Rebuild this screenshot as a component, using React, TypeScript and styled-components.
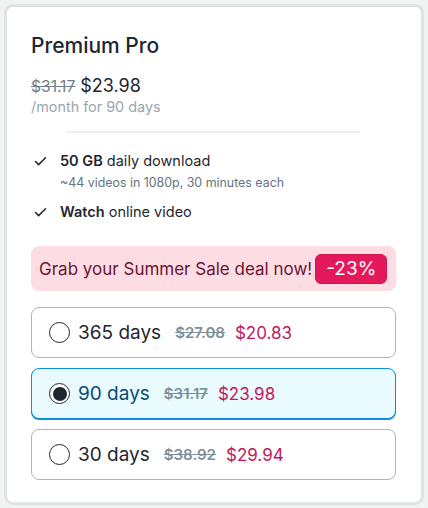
import React, { useState } from "react";
import styled, { createGlobalStyle } from "styled-components";

const GlobalStyle = createGlobalStyle`
  html, body {
    margin: 0;
    padding: 0;
    background: #f1f3f3;
    font-family: Inter, "Noto Sans", sans-serif;
    color: #1f2630;
  }
`;

interface Plan {
  id: string;
  label: string;
  oldPrice: string;
  price: string;
}

const plans: Plan[] = [
  { id: "365", label: "365 days", oldPrice: "$27.08", price: "$20.83" },
  { id: "90", label: "90 days", oldPrice: "$31.17", price: "$23.98" },
  { id: "30", label: "30 days", oldPrice: "$38.92", price: "$29.94" },
];

const CheckIcon = () => (
  <svg width="15" height="15" viewBox="0 0 24 24" fill="none" stroke="#1f2630" strokeWidth="2.4" strokeLinecap="round" strokeLinejoin="round">
    <path d="M20 6 9 17l-5-5" />
  </svg>
);

const App: React.FC = () => {
  const [selected, setSelected] = useState("90");

  return (
    <Page>
      <GlobalStyle />
      <Card>
        <Title>Premium Pro</Title>
        <PriceLine>
          <OldPrice>$31.17</OldPrice>
          <Price>$23.98</Price>
        </PriceLine>
        <Period>/month for 90 days</Period>
        <Divider />
        <Features>
          <Feature>
            <CheckIcon />
            <div>
              <FeatureText>
                <strong>50 GB</strong> daily download
              </FeatureText>
              <FeatureNote>~44 videos in 1080p, 30 minutes each</FeatureNote>
            </div>
          </Feature>
          <Feature>
            <CheckIcon />
            <FeatureText>
              <strong>Watch</strong> online video
            </FeatureText>
          </Feature>
        </Features>
        <Promo>
          <PromoText>Grab your Summer Sale deal now!</PromoText>
          <Badge>-23%</Badge>
        </Promo>
        <Options>
          {plans.map((p) => (
            <Option key={p.id} $active={selected === p.id} onClick={() => setSelected(p.id)}>
              <Radio $active={selected === p.id} />
              <OptionLabel $active={selected === p.id}>{p.label}</OptionLabel>
              <OptionOld>{p.oldPrice}</OptionOld>
              <OptionPrice>{p.price}</OptionPrice>
            </Option>
          ))}
        </Options>
      </Card>
    </Page>
  );
};

const Page = styled.div`
  padding: 4px;
`;

const Card = styled.div`
  box-sizing: border-box;
  width: 420px;
  background: #fff;
  border: 3px solid #dfe4e3;
  border-radius: 9px;
  padding: 26px 25px 22px 24px;
  display: flex;
  flex-direction: column;
`;

const Title = styled.h2`
  margin: 0;
  font-size: 21px;
  font-weight: 500;
  line-height: 26px;
  color: #1f2630;
`;

const PriceLine = styled.div`
  margin-top: 16px;
  display: flex;
  align-items: baseline;
  gap: 5px;
  line-height: 22px;
`;

const OldPrice = styled.span`
  font-size: 15.6px;
  color: #6f7f87;
  text-decoration: line-through;
`;

const Price = styled.span`
  font-size: 18px;
  color: #1f2630;
`;

const Period = styled.div`
  font-size: 14.4px;
  color: #9aa6ad;
  line-height: 18px;
`;

const Divider = styled.hr`
  margin: 15px 36px 0 36px;
  border: none;
  border-top: 2px solid #eef0f1;
`;

const Features = styled.div`
  margin-top: 18px;
  display: flex;
  flex-direction: column;
  gap: 9px;
`;

const Feature = styled.div`
  display: flex;
  align-items: flex-start;
  gap: 12px;
  padding-left: 2px;

  svg {
    margin-top: 3px;
    flex: none;
  }
`;

const FeatureText = styled.div`
  font-size: 14.5px;
  line-height: 20px;
  color: #1f2630;

  strong {
    font-weight: 600;
  }
`;

const FeatureNote = styled.div`
  margin-top: 2px;
  font-size: 12.4px;
  line-height: 20px;
  color: #66737c;
`;

const Promo = styled.div`
  margin-top: 24px;
  height: 45px;
  flex: none;
  box-sizing: border-box;
  background: #fddde3;
  border-radius: 8px;
  padding: 0 8px;
  display: flex;
  align-items: center;
  gap: 3px;
  font-size: 17px;
  color: #6a1436;
`;

const PromoText = styled.span`
  white-space: nowrap;
`;

const Badge = styled.span`
  flex: none;
  background: #e3195b;
  border: 1px solid #cf1552;
  color: #fff;
  font-size: 19px;
  border-radius: 6px;
  padding: 3px 10px;
  line-height: 22px;
`;

const Options = styled.div`
  margin-top: 16px;
  display: flex;
  flex-direction: column;
  gap: 10px;
`;

const Option = styled.div<{ $active: boolean }>`
  box-sizing: border-box;
  height: 51px;
  display: flex;
  align-items: center;
  padding: 0 17px;
  border-radius: 8px;
  border: 1px solid ${({ $active }) => ($active ? "#0b8fd6" : "#aab6bc")};
  background: ${({ $active }) => ($active ? "#e9fbfe" : "#fff")};
  box-shadow: ${({ $active }) => ($active ? "0 1px 0 #0b8fd6" : "none")};
  cursor: pointer;
`;

const Radio = styled.span<{ $active: boolean }>`
  box-sizing: border-box;
  width: 21px;
  height: 21px;
  border-radius: 50%;
  border: 1.5px solid #1f2630;
  background: #fff;
  position: relative;
  flex: none;

  &::after {
    content: "";
    position: absolute;
    inset: 2.5px;
    border-radius: 50%;
    background: ${({ $active }) => ($active ? "#1f2630" : "transparent")};
  }
`;

const OptionLabel = styled.span<{ $active: boolean }>`
  margin-left: 8px;
  font-size: 19px;
  color: ${({ $active }) => ($active ? "#0b4a75" : "#1f2630")};
`;

const OptionOld = styled.span`
  margin-left: 14px;
  font-size: 15px;
  font-weight: 600;
  color: #7d909a;
  text-decoration: line-through;
`;

const OptionPrice = styled.span`
  margin-left: 10px;
  font-size: 17px;
  color: #c2185b;
`;

export default App;
